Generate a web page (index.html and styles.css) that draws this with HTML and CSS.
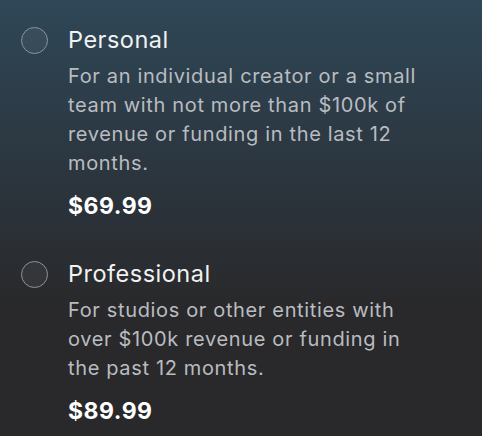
FILE: index.html
```html
<!DOCTYPE html>
<html lang="en">
<head>
    <meta charset="UTF-8">
    <title>License</title>

    <link rel="stylesheet" href="styles.css">

</head>
<body>

<div class="plans">
    <label class="plan">
        <span class="radio"></span>
        <div class="info">
            <div class="name">Personal</div>
            <div class="desc">For an individual creator or a small team with not more than $100k of revenue or funding in the last 12 months.</div>
            <div class="price">$69.99</div>
        </div>
    </label>
    <label class="plan">
        <span class="radio"></span>
        <div class="info">
            <div class="name">Professional</div>
            <div class="desc">For studios or other entities with over $100k revenue or funding in the past 12 months.</div>
            <div class="price">$89.99</div>
        </div>
    </label>
</div>

</body>
</html>
```

FILE: styles.css
```css
html, body {
    margin: 0;
    height: 100%;
}

body {
    font-family: Inter, "Noto Sans", sans-serif;
    background: linear-gradient(to bottom, #2f4757 0%, #2b333b 45%, #29292b 70%, #29292b 100%);
    color: #f2f2f2;
}

.plans {
    display: flex;
    flex-direction: column;
    gap: 40px;
    padding: 26px 0 0 21px;
}

.plan {
    display: flex;
    gap: 20px;
}

.radio {
    flex: none;
    width: 25px;
    height: 25px;
    margin-top: 1px;
    border: 1px solid #8d959b;
    border-radius: 50%;
    background: rgba(255, 255, 255, 0.05);
}

.info {
    width: 362px;
}

.name {
    font-size: 23.5px;
    line-height: 28px;
    letter-spacing: 0.5px;
}

.desc {
    margin-top: 8px;
    font-size: 20px;
    line-height: 29px;
    letter-spacing: 0.65px;
    color: #b9bcc0;
}

.price {
    margin-top: 14px;
    font-size: 23px;
    line-height: 28px;
    font-weight: 700;
    letter-spacing: 0.5px;
    color: #ffffff;
}
```
